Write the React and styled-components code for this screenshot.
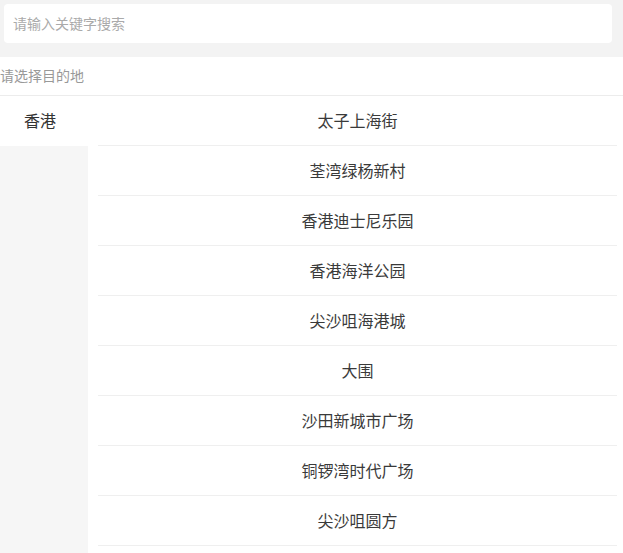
import React from "react";
import styled, { createGlobalStyle } from "styled-components";

const Global = createGlobalStyle`
  html, body { margin: 0; padding: 0; background: #ffffff; }
  body { font-family: "Noto Sans CJK SC", "Noto Sans", sans-serif; }
  * { box-sizing: border-box; }
`;

const Page = styled.div`
  width: 623px;
  height: 553px;
  overflow: hidden;
  background: #fff;
`;

const SearchBar = styled.div`
  background: #f3f3f3;
  padding: 4px 11px 14px 4px;
  height: 57px;
`;

const SearchInput = styled.input`
  display: block;
  width: 100%;
  height: 39px;
  border: none;
  outline: none;
  border-radius: 4px;
  background: #fff;
  padding: 0 0 2px 9px;
  font-family: inherit;
  font-size: 14px;
  color: #333;
  &::placeholder { color: #aaa; }
`;

const Header = styled.div`
  height: 39px;
  border-bottom: 1px solid #ececec;
  font-size: 14px;
  line-height: 37px;
  color: #999;
`;

const Body = styled.div`
  display: flex;
  height: 457px;
`;

const Side = styled.div`
  width: 88px;
  background: #f6f6f6;
  display: flex;
  flex-direction: column;
`;

const SideItem = styled.div`
  height: 50px;
  line-height: 48px;
  padding-left: 24px;
  font-size: 16px;
  color: #333;
  background: ${(p) => (p.$active ? "#ffffff" : "transparent")};
`;

const List = styled.div`
  flex: 1;
  margin: 0 6px 0 10px;
`;

const Row = styled.div`
  height: 50px;
  padding-bottom: 1px;
  border-bottom: 1px solid #efefef;
  display: flex;
  align-items: center;
  justify-content: center;
  font-size: 16px;
  color: #3a3a3a;
`;

const places = [
  "太子上海街",
  "荃湾绿杨新村",
  "香港迪士尼乐园",
  "香港海洋公园",
  "尖沙咀海港城",
  "大围",
  "沙田新城市广场",
  "铜锣湾时代广场",
  "尖沙咀圆方",
];

export default function App() {
  return (
    <Page>
      <Global />
      <SearchBar>
        <SearchInput placeholder="请输入关键字搜索" />
      </SearchBar>
      <Header>请选择目的地</Header>
      <Body>
        <Side>
          <SideItem $active>香港</SideItem>
        </Side>
        <List>
          {places.map((p) => (
            <Row key={p}>{p}</Row>
          ))}
        </List>
      </Body>
    </Page>
  );
}
